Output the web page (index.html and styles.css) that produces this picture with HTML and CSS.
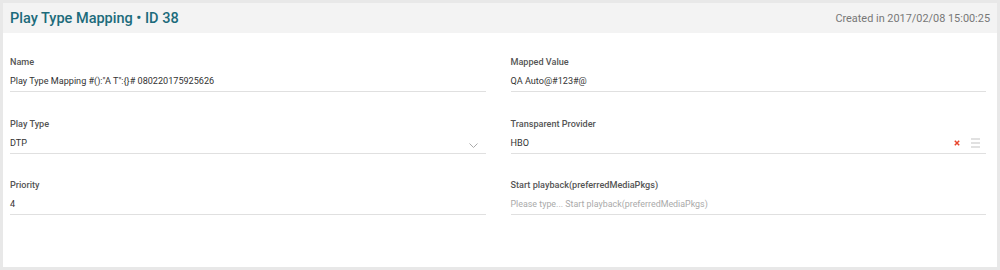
FILE: index.html
```html
<!DOCTYPE html>
<html lang="en">
<head>
    <meta charset="UTF-8">
    <title>Play Type Mapping</title>
    <link rel="stylesheet" href="styles.css">
</head>
<body>
    <div class="card">
        <div class="card-header">
            <h1>Play Type Mapping &bull; ID 38</h1>
            <span class="created">Created in 2017/02/08 15:00:25</span>
        </div>

        <div class="form">
            <div class="field">
                <label>Name</label>
                <div class="value">Play Type Mapping #():"A T":{}# 080220175925626</div>
            </div>
            <div class="field">
                <label>Mapped Value</label>
                <div class="value">QA Auto@#123#@</div>
            </div>

            <div class="field">
                <label>Play Type</label>
                <div class="value">
                    <span>DTP</span>
                    <svg class="chevron" width="9" height="5" viewBox="0 0 9 5">
                        <path d="M0.5 0.5 L4.5 4.5 L8.5 0.5" fill="none" stroke="#aaa" stroke-width="1"/>
                    </svg>
                </div>
            </div>
            <div class="field">
                <label>Transparent Provider</label>
                <div class="value">
                    <span>HBO</span>
                    <span class="tools">
                        <svg width="6" height="6" viewBox="0 0 6 6">
                            <path d="M0.8 0.8 L5.2 5.2 M5.2 0.8 L0.8 5.2" stroke="#e8452c" stroke-width="1.5"/>
                        </svg>
                        <svg width="9" height="10" viewBox="0 0 9 10">
                            <path d="M0 1 H9 M0 5 H9 M0 9 H9" stroke="#c4c4c4" stroke-width="1.1"/>
                        </svg>
                    </span>
                </div>
            </div>

            <div class="field">
                <label>Priority</label>
                <div class="value">4</div>
            </div>
            <div class="field">
                <label>Start playback(preferredMediaPkgs)</label>
                <div class="value placeholder">Please type... Start playback(preferredMediaPkgs)</div>
            </div>
        </div>
    </div>
</body>
</html>
```

FILE: styles.css
```css
body {
    font-family: Roboto, "Noto Sans", Arial, sans-serif;
    margin: 0;
    padding: 3px;
    background-color: #e8e8e8;
}

.card {
    background: white;
    height: 264px;
    box-sizing: border-box;
}

.card-header {
    display: flex;
    justify-content: space-between;
    align-items: center;
    height: 30px;
    padding: 0 7px 0 7px;
    background-color: #f3f3f3;
}

h1 {
    margin: 0;
    font-size: 14.5px;
    font-weight: 500;
    color: #1c6b7b;
}

.created {
    font-size: 10.9px;
    color: #777;
}

.form {
    display: grid;
    grid-template-columns: 1fr 1fr;
    column-gap: 25px;
    row-gap: 24.5px;
    padding: 22px 11px 0 7px;
}

.field label {
    display: block;
    font-size: 9.1px;
    font-weight: 500;
    line-height: 14px;
    color: #555;
    margin-bottom: 2px;
}

.value {
    display: flex;
    justify-content: space-between;
    align-items: center;
    height: 20px;
    font-size: 9.1px;
    color: #333;
    border-bottom: 1px solid #e0e0e0;
}

.placeholder {
    font-size: 8.9px;
    color: #aaa;
}

.chevron {
    margin-right: 8px;
    margin-top: 5px;
}

.tools {
    display: flex;
    align-items: center;
    gap: 11px;
    margin-right: 6px;
}
```
